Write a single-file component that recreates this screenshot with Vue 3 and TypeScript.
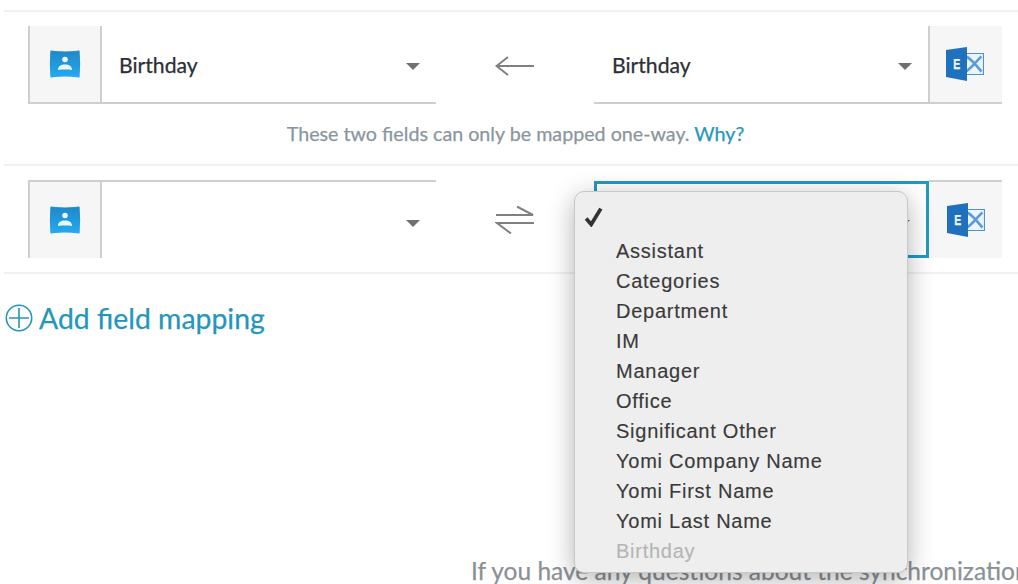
<script setup lang="ts">
const options: string[] = [
  'Assistant', 'Categories', 'Department', 'IM', 'Manager', 'Office',
  'Significant Other', 'Yomi Company Name', 'Yomi First Name', 'Yomi Last Name',
]
</script>

<template>
  <div class="page">
    <section class="mapping first">
      <div class="side">
        <div class="cell cell-left">
          <svg viewBox="0 0 32 30" width="32" height="30">
            <defs>
              <linearGradient id="cg1" x1="0" y1="0" x2="0" y2="1">
                <stop offset="0" stop-color="#2088c8" />
                <stop offset="1" stop-color="#22aaf0" />
              </linearGradient>
            </defs>
            <path d="M2 2C10 3.2 22 3.2 30 2C30.6 9 30.6 21 30 28C22 26.8 10 26.8 2 28C1.4 21 1.4 9 2 2Z" fill="url(#cg1)" stroke="url(#cg1)" stroke-width="1.2" stroke-linejoin="round" />
            <circle cx="16" cy="10.5" r="2.8" fill="#eaf5fc" />
            <path d="M9 21C9 17 12 15.5 16 15.5C20 15.5 23 17 23 21C18 20.4 14 20.4 9 21Z" fill="#eaf5fc" />
          </svg>
        </div>
        <div class="field">
          <span class="value">Birthday</span>
          <span class="caret"></span>
        </div>
      </div>
      <div class="dir">
        <svg viewBox="0 0 40 24" width="40" height="24">
          <path d="M1 12H39M13 3L1.5 12L13 21" fill="none" stroke="#7f7f7f" stroke-width="2" />
        </svg>
      </div>
      <div class="side">
        <div class="field">
          <span class="value">Birthday</span>
          <span class="caret"></span>
        </div>
        <div class="cell cell-right">
          <div class="logo">
            <svg viewBox="0 0 38 34" width="38" height="34">
              <path d="M17 6.5H37.5V27.5H17Z" fill="#eef4fb" stroke="#4d92d6" stroke-width="1.2" />
              <path d="M20 9.5C26 12 31 20 35.5 24.5M35.5 9.5C31 13 26 21 20 24.5" fill="none" stroke="#5a9bdb" stroke-width="2.6" />
              <path d="M0 3L21 0V34L0 30Z" fill="#1f70bd" />
            </svg>
            <span class="e">E</span>
          </div>
        </div>
      </div>
    </section>

    <p class="note">These two fields can only be mapped one-way. <a class="why">Why?</a></p>

    <section class="mapping second">
      <div class="side">
        <div class="cell cell-left">
          <svg viewBox="0 0 32 30" width="32" height="30">
            <defs>
              <linearGradient id="cg2" x1="0" y1="0" x2="0" y2="1">
                <stop offset="0" stop-color="#2088c8" />
                <stop offset="1" stop-color="#22aaf0" />
              </linearGradient>
            </defs>
            <path d="M2 2C10 3.2 22 3.2 30 2C30.6 9 30.6 21 30 28C22 26.8 10 26.8 2 28C1.4 21 1.4 9 2 2Z" fill="url(#cg2)" stroke="url(#cg2)" stroke-width="1.2" stroke-linejoin="round" />
            <circle cx="16" cy="10.5" r="2.8" fill="#eaf5fc" />
            <path d="M9 21C9 17 12 15.5 16 15.5C20 15.5 23 17 23 21C18 20.4 14 20.4 9 21Z" fill="#eaf5fc" />
          </svg>
        </div>
        <div class="field">
          <span class="caret"></span>
        </div>
      </div>
      <div class="dir">
        <svg viewBox="0 0 40 28" width="40" height="28">
          <path d="M1 9H38L22 0.5M39 17H2L16 27.5" fill="none" stroke="#808080" stroke-width="2" />
        </svg>
      </div>
      <div class="side">
        <div class="field focused">
          <span class="caret"></span>
        </div>
        <div class="cell cell-right">
          <div class="logo">
            <svg viewBox="0 0 38 34" width="38" height="34">
              <path d="M17 6.5H37.5V27.5H17Z" fill="#eef4fb" stroke="#4d92d6" stroke-width="1.2" />
              <path d="M20 9.5C26 12 31 20 35.5 24.5M35.5 9.5C31 13 26 21 20 24.5" fill="none" stroke="#5a9bdb" stroke-width="2.6" />
              <path d="M0 3L21 0V34L0 30Z" fill="#1f70bd" />
            </svg>
            <span class="e">E</span>
          </div>
        </div>
      </div>
    </section>

    <a class="add">
      <svg viewBox="0 0 28 28" width="28" height="28">
        <circle cx="14" cy="14" r="12.7" fill="none" stroke="#2596bb" stroke-width="1.6" />
        <path d="M14 4V24M4 14H24" stroke="#2596bb" stroke-width="1.6" />
      </svg>
      <span>Add field mapping</span>
    </a>

    <p class="footer">If you have any questions about the synchronization</p>

    <div class="menu">
      <div class="item check">
        <svg viewBox="0 0 18 20" width="19" height="21">
          <path d="M2 12L6.8 17.5L16 2.5" fill="none" stroke="#333" stroke-width="3.6" />
        </svg>
      </div>
      <div v-for="o in options" :key="o" class="item">{{ o }}</div>
      <div class="item disabled">Birthday</div>
    </div>
  </div>
</template>

<style>
html, body { margin: 0; overflow: hidden; background: #fff; }
</style>

<style scoped>
.page {
  position: relative;
  width: 1018px;
  height: 584px;
  overflow: hidden;
  box-sizing: border-box;
  padding-left: 4px;
  padding-top: 10px;
  font-family: Lato, "Open Sans", sans-serif;
  color: #2b2f36;
  -webkit-text-stroke: 0.25px currentColor;
}
.mapping {
  display: flex;
  align-items: stretch;
  box-sizing: border-box;
  padding: 14px 16px 0 24px;
  border-top: 2px solid #f1f1f1;
}
.second {
  padding-bottom: 14px;
  border-bottom: 2px solid #f1f1f1;
}
.side {
  display: flex;
  flex: 0 0 408px;
  height: 78px;
}
.dir {
  flex: 0 0 158px;
  display: flex;
  align-items: center;
  justify-content: center;
  padding-top: 1px;
  box-sizing: border-box;
}
.cell {
  flex: 0 0 74px;
  box-sizing: border-box;
  background: #f6f6f6;
  display: flex;
  align-items: center;
  justify-content: center;
  border-bottom: 2px solid #cfcfcf;
}
.cell-left {
  border-left: 2px solid #cfcfcf;
  border-right: 2px solid #cfcfcf;
}
.cell-right {
  box-shadow: inset 2px 0 0 #cfcfcf;
}
.second .cell {
  border-bottom: 0;
  border-top: 2px solid #cfcfcf;
}
.second .cell-right {
  flex-basis: 73px;
  box-shadow: none;
}
.logo {
  position: relative;
  display: flex;
  width: 38px;
  height: 34px;
}
.e {
  position: absolute;
  left: 6px;
  top: 6px;
  font: bold 14px/22px "Liberation Sans", sans-serif;
  color: #f2f7fc;
  transform: scaleX(0.75);
}
.field {
  position: relative;
  flex: 1;
  box-sizing: border-box;
  display: flex;
  align-items: center;
  padding: 2px 0 0 17px;
  border-bottom: 2px solid #cfcfcf;
}
.side:last-child .field { padding-left: 18px; }
.second .field {
  border-bottom: 0;
  border-top: 2px solid #cfcfcf;
}
.second .field.focused {
  margin-top: 1px;
  border: 3px solid #2299c1;
}
.value {
  font-size: 21.2px;
  line-height: 26px;
  color: #2b2f36;
}
.caret {
  position: absolute;
  right: 16px;
  top: 50%;
  margin-top: -1px;
  width: 0;
  height: 0;
  border-left: 7px solid transparent;
  border-right: 7px solid transparent;
  border-top: 7px solid #707070;
}
.second .caret { margin-top: 0; }
.note {
  margin: 0;
  padding: 17px 0 17px 9px;
  text-align: center;
  font-size: 19.7px;
  line-height: 26px;
  color: #8a969e;
  white-space: nowrap;
}
.why { color: #2596bb; }
.add {
  display: flex;
  align-items: center;
  gap: 6px;
  margin-top: 27px;
  height: 34px;
  padding-left: 1px;
  color: #2596bb;
  font-size: 28.4px;
  line-height: 34px;
}
.footer {
  margin: 221px 0 0 467px;
  font-size: 24.5px;
  line-height: 30px;
  color: #8a9196;
  white-space: nowrap;
}
.menu {
  position: absolute;
  left: 574px;
  top: 191px;
  width: 334px;
  height: 382px;
  box-sizing: border-box;
  padding-top: 10px;
  background: #eee;
  border-radius: 10px;
  border: 1px solid #c8c8c8;
  box-shadow: 0 6px 26px rgba(0, 0, 0, 0.3);
  font-family: "Liberation Sans", Arimo, sans-serif;
  font-size: 20px;
  letter-spacing: 0.75px;
  color: #3a3a3a;
  -webkit-text-stroke: 0.15px currentColor;
}
.item {
  height: 30px;
  line-height: 30px;
  padding-left: 41px;
  white-space: nowrap;
}
.check {
  position: relative;
  padding: 0;
  height: 34px;
}
.check svg {
  position: absolute;
  left: 9px;
  top: 4px;
}
.disabled { color: #b5b5b5; }
</style>
